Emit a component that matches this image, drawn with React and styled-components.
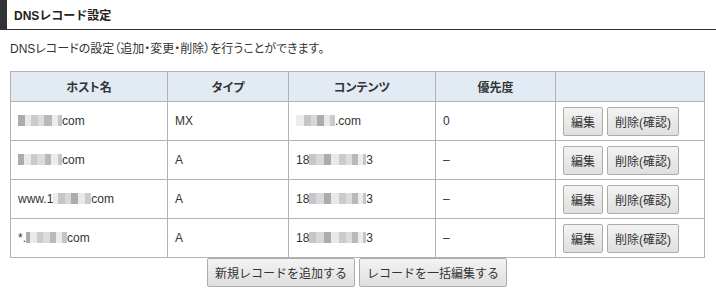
import { createGlobalStyle, styled } from 'styled-components'

const GlobalStyle = createGlobalStyle`
  body {
    margin: 0;
    background: #fff;
    color: #333;
    font-family: "Liberation Sans", "Noto Sans CJK JP", sans-serif;
    font-size: 12px;
  }
`

const Page = styled.div`
  width: 716px;
`

const Heading = styled.h2`
  margin: 0;
  height: 29px;
  display: flex;
  align-items: center;
  border-left: 7px solid #333;
  padding-left: 7px;
  font-size: 12px;
  font-weight: bold;
  color: #222;
`

const Rule = styled.div`
  height: 1px;
  background: #333;
`

const Body = styled.div`
  padding: 11px 12px 0 10px;
`

const Lead = styled.p`
  margin: 0 0 14px;
  line-height: 16px;
  font-feature-settings: "palt";
`

const Table = styled.table`
  width: 694px;
  border-collapse: collapse;
  table-layout: fixed;
`

const Th = styled.th`
  height: 29px;
  padding: 0;
  background: #e2eaf4;
  border: 1px solid #b3b3b3;
  font-weight: bold;
  font-size: 12px;
  color: #333;
  font-feature-settings: "palt";
`

const Td = styled.td`
  height: 38px;
  padding: 0 0 0 7px;
  border: 1px solid #b3b3b3;
  white-space: nowrap;
`

const Blur = styled.span`
  display: inline-flex;
  vertical-align: -1px;
  height: 11px;
`

const Pix = styled.span`
  width: ${(p) => p.w}px;
  background: ${(p) => p.c};
`

const Button = styled.button`
  height: 29px;
  padding: 0 7px;
  font-family: "Liberation Sans", "Noto Sans CJK JP", sans-serif;
  font-size: 12px;
  color: #333;
  border: 1px solid #acacac;
  border-radius: 2px;
  background: linear-gradient(#f3f3f3, #dfdfdf);
`

const Actions = styled.div`
  display: flex;
  gap: 4px;
`

const Footer = styled.div`
  display: flex;
  justify-content: center;
  gap: 4px;
  width: 694px;
`

const shades = ['#dcdcdc', '#c6c6c6', '#e9e9e9', '#b9b9b9', '#d8d8d8', '#cbcbcb', '#ececec', '#acacac']

const Masked = ({ widths }) => (
  <Blur>
    {widths.map((w, i) => (
      <Pix key={i} w={w} c={shades[(i * 3 + widths.length) % shades.length]} />
    ))}
  </Blur>
)

const rows = [
  { pre: '', host: [7, 6, 7, 6, 8, 6, 4], post: 'com', type: 'MX', cpre: '', cont: [8, 7, 6, 7, 6, 5], cpost: '.com', prio: '0' },
  { pre: '', host: [6, 7, 6, 8, 6, 7, 4], post: 'com', type: 'A', cpre: '18', cont: [7, 8, 7, 8, 7, 6, 6, 5, 3], cpost: '3', prio: '–' },
  { pre: 'www.1', host: [5, 7, 6, 7, 7, 6], post: 'com', type: 'A', cpre: '18', cont: [7, 8, 7, 8, 7, 6, 6, 5, 3], cpost: '3', prio: '–' },
  { pre: '*.', host: [4, 7, 6, 7, 6, 6, 5], post: 'com', type: 'A', cpre: '18', cont: [7, 8, 7, 8, 7, 6, 6, 5, 3], cpost: '3', prio: '–' },
]

export default function App() {
  return (
    <Page>
      <GlobalStyle />
      <Heading>DNSレコード設定</Heading>
      <Rule />
      <Body>
        <Lead>DNSレコードの設定（追加・変更・削除）を行うことができます。</Lead>
        <Table>
          <colgroup>
            <col style={{ width: 157 }} />
            <col style={{ width: 121 }} />
            <col style={{ width: 147 }} />
            <col style={{ width: 120 }} />
            <col style={{ width: 149 }} />
          </colgroup>
          <thead>
            <tr>
              <Th>ホスト名</Th>
              <Th>タイプ</Th>
              <Th>コンテンツ</Th>
              <Th>優先度</Th>
              <Th />
            </tr>
          </thead>
          <tbody>
            {rows.map((r, i) => (
              <tr key={i}>
                <Td>
                  {r.pre}
                  <Masked widths={r.host} />
                  {r.post}
                </Td>
                <Td>{r.type}</Td>
                <Td>
                  {r.cpre}
                  <Masked widths={r.cont} />
                  {r.cpost}
                </Td>
                <Td>{r.prio}</Td>
                <Td>
                  <Actions>
                    <Button>編集</Button>
                    <Button>削除(確認)</Button>
                  </Actions>
                </Td>
              </tr>
            ))}
          </tbody>
        </Table>
        <Footer>
          <Button>新規レコードを追加する</Button>
          <Button>レコードを一括編集する</Button>
        </Footer>
      </Body>
    </Page>
  )
}
